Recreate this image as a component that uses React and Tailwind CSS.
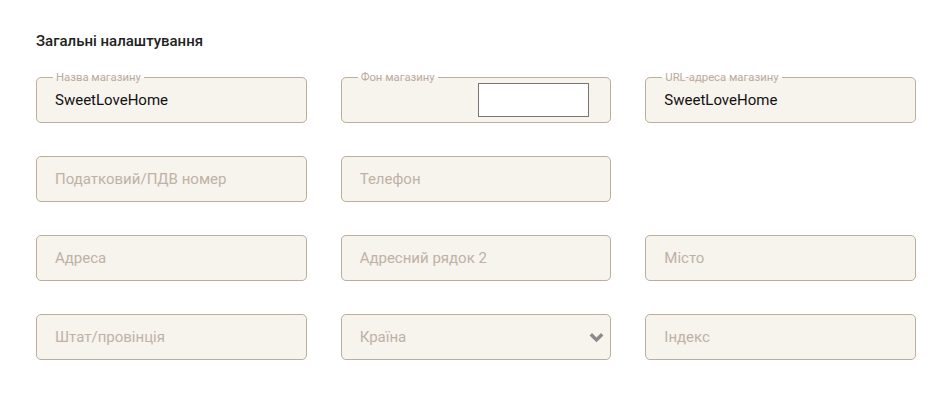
import React from 'react';

const font = { fontFamily: 'Roboto, "Noto Sans", sans-serif' };

function Field({ label, value, placeholder, children }) {
  return (
    <div className="relative h-[46px] rounded-[5px] border border-[#bcae9e] bg-[#f7f3ed] flex items-center pl-[18px] pr-5">
      {label && (
        <span className="absolute left-[16px] top-[-7px] px-[3px] text-[11.3px] leading-[13px] text-[#b9ab9c] bg-[linear-gradient(to_bottom,#ffffff_54%,#f7f3ed_54%)]">
          {label}
        </span>
      )}
      {value && <span className="text-[15px] text-[#111]">{value}</span>}
      {placeholder && <span className="text-[15px] text-[#beb2a6]">{placeholder}</span>}
      {children}
    </div>
  );
}

export default function App() {
  return (
    <div className="w-[952px] h-[404px] bg-white px-9 pt-[31px]" style={font}>
      <h2 className="text-[15px] leading-5 font-medium text-[#222] mb-[26px]">Загальні налаштування</h2>
      <div className="grid grid-cols-3 gap-x-[34px] gap-y-[33px]">
        <Field label="Назва магазину" value="SweetLoveHome" />
        <Field label="Фон магазину">
          <div className="ml-auto mr-[1px] w-[111px] h-[34px] bg-white border border-[#767676]" />
        </Field>
        <Field label="URL-адреса магазину" value="SweetLoveHome" />

        <Field placeholder="Податковий/ПДВ номер" />
        <Field placeholder="Телефон" />
        <div />

        <Field placeholder="Адреса" />
        <Field placeholder="Адресний рядок 2" />
        <Field placeholder="Місто" />

        <Field placeholder="Штат/провінція" />
        <Field placeholder="Країна">
          <svg className="ml-auto -mr-[14px]" width="15" height="11" viewBox="0 0 15 11">
            <path d="M1.8 2.2 L7.5 7.9 L13.2 2.2" fill="none" stroke="#8a8a8a" strokeWidth="3.4" />
          </svg>
        </Field>
        <Field placeholder="Індекс" />
      </div>
    </div>
  );
}
